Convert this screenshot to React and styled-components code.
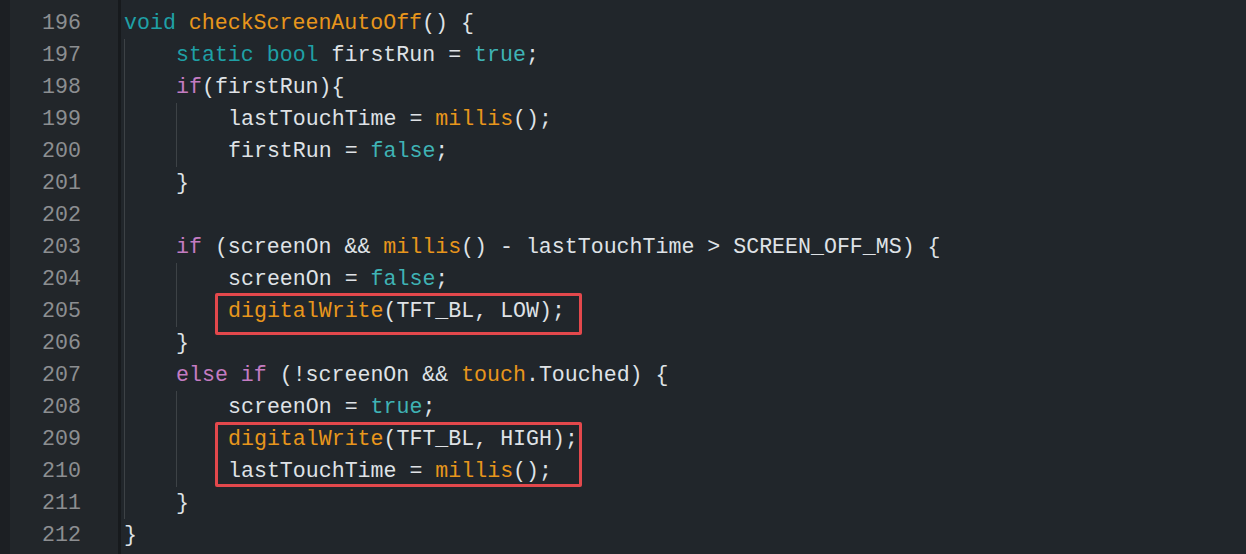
import React from "react";
import styled, { createGlobalStyle } from "styled-components";

const GlobalStyle = createGlobalStyle`
  html, body {
    margin: 0;
    padding: 0;
    background: #21262b;
  }
`;

const Editor = styled.div`
  display: grid;
  grid-template-columns: auto 1fr;
  height: 554px;
  background: #21262b;
  font-family: "Liberation Mono", "DejaVu Sans Mono", monospace;
  font-size: 21.6px;
  overflow: hidden;
`;

const Gutter = styled.div`
  display: flex;
  flex-direction: column;
  width: 108px;
  padding-top: 7px;
  background: #22262a;
  border-left: 10px solid #1c1f23;
  border-right: 3px solid #171a1d;
`;

const LineNo = styled.div`
  height: 32px;
  line-height: 32px;
  text-align: right;
  padding-right: 37px;
  color: #8c8e91;
`;

const Code = styled.div`
  display: flex;
  flex-direction: column;
  padding-top: 7px;
  padding-left: 3px;
`;

const Line = styled.div`
  display: flex;
  height: 32px;
  line-height: 32px;
  white-space: pre;
  color: #dfe2e6;
`;

const Guide = styled.span`
  display: inline-block;
  flex: none;
  width: 52px;
  height: 32px;
  box-sizing: border-box;
  border-left: 1px solid #3d4246;
`;

const Text = styled.span`
  position: relative;
`;

const colors = {
  kw: "#1fa0a6",
  lit: "#3fb3b5",
  ctl: "#c47cc2",
  fn: "#e8961c",
};

const Tok = styled.span`
  color: ${(p) => colors[p.$t] || "#dfe2e6"};
`;

const Mark = styled.span`
  position: absolute;
  left: -13px;
  top: ${(p) => p.$top}px;
  width: 367px;
  height: ${(p) => p.$h}px;
  box-sizing: border-box;
  border: 3px solid #e3484c;
  border-radius: 2px;
  pointer-events: none;
`;

const lines = [
  { n: 196, ind: 0, t: [["kw", "void"], " ", ["fn", "checkScreenAutoOff"], "() {"] },
  { n: 197, ind: 1, t: [["kw", "static"], " ", ["kw", "bool"], " firstRun = ", ["lit", "true"], ";"] },
  { n: 198, ind: 1, t: [["ctl", "if"], "(firstRun){"] },
  { n: 199, ind: 2, t: ["lastTouchTime = ", ["fn", "millis"], "();"] },
  { n: 200, ind: 2, t: ["firstRun = ", ["lit", "false"], ";"] },
  { n: 201, ind: 1, t: ["}"] },
  { n: 202, ind: 1, t: [] },
  { n: 203, ind: 1, t: [["ctl", "if"], " (screenOn && ", ["fn", "millis"], "() - lastTouchTime > SCREEN_OFF_MS) {"] },
  { n: 204, ind: 2, t: ["screenOn = ", ["lit", "false"], ";"] },
  { n: 205, ind: 2, t: [["fn", "digitalWrite"], "(TFT_BL, LOW);"], mark: { top: -2, h: 42 } },
  { n: 206, ind: 1, t: ["}"] },
  { n: 207, ind: 1, t: [["ctl", "else"], " ", ["ctl", "if"], " (!screenOn && ", ["fn", "touch"], ".Touched) {"] },
  { n: 208, ind: 2, t: ["screenOn = ", ["lit", "true"], ";"] },
  { n: 209, ind: 2, t: [["fn", "digitalWrite"], "(TFT_BL, HIGH);"], mark: { top: -1, h: 65 } },
  { n: 210, ind: 2, t: ["lastTouchTime = ", ["fn", "millis"], "();"] },
  { n: 211, ind: 1, t: ["}"] },
  { n: 212, ind: 0, t: ["}"] },
];

export default function App() {
  return (
    <>
      <GlobalStyle />
      <Editor>
        <Gutter>
          {lines.map((l) => (
            <LineNo key={l.n}>{l.n}</LineNo>
          ))}
        </Gutter>
        <Code>
          {lines.map((l) => (
            <Line key={l.n}>
              {Array.from({ length: l.ind }).map((_, i) => (
                <Guide key={i} />
              ))}
              <Text>
                {l.mark && <Mark $top={l.mark.top} $h={l.mark.h} />}
                {l.t.map((tok, i) =>
                  typeof tok === "string" ? (
                    <Tok key={i}>{tok}</Tok>
                  ) : (
                    <Tok key={i} $t={tok[0]}>
                      {tok[1]}
                    </Tok>
                  )
                )}
              </Text>
            </Line>
          ))}
        </Code>
      </Editor>
    </>
  );
}
